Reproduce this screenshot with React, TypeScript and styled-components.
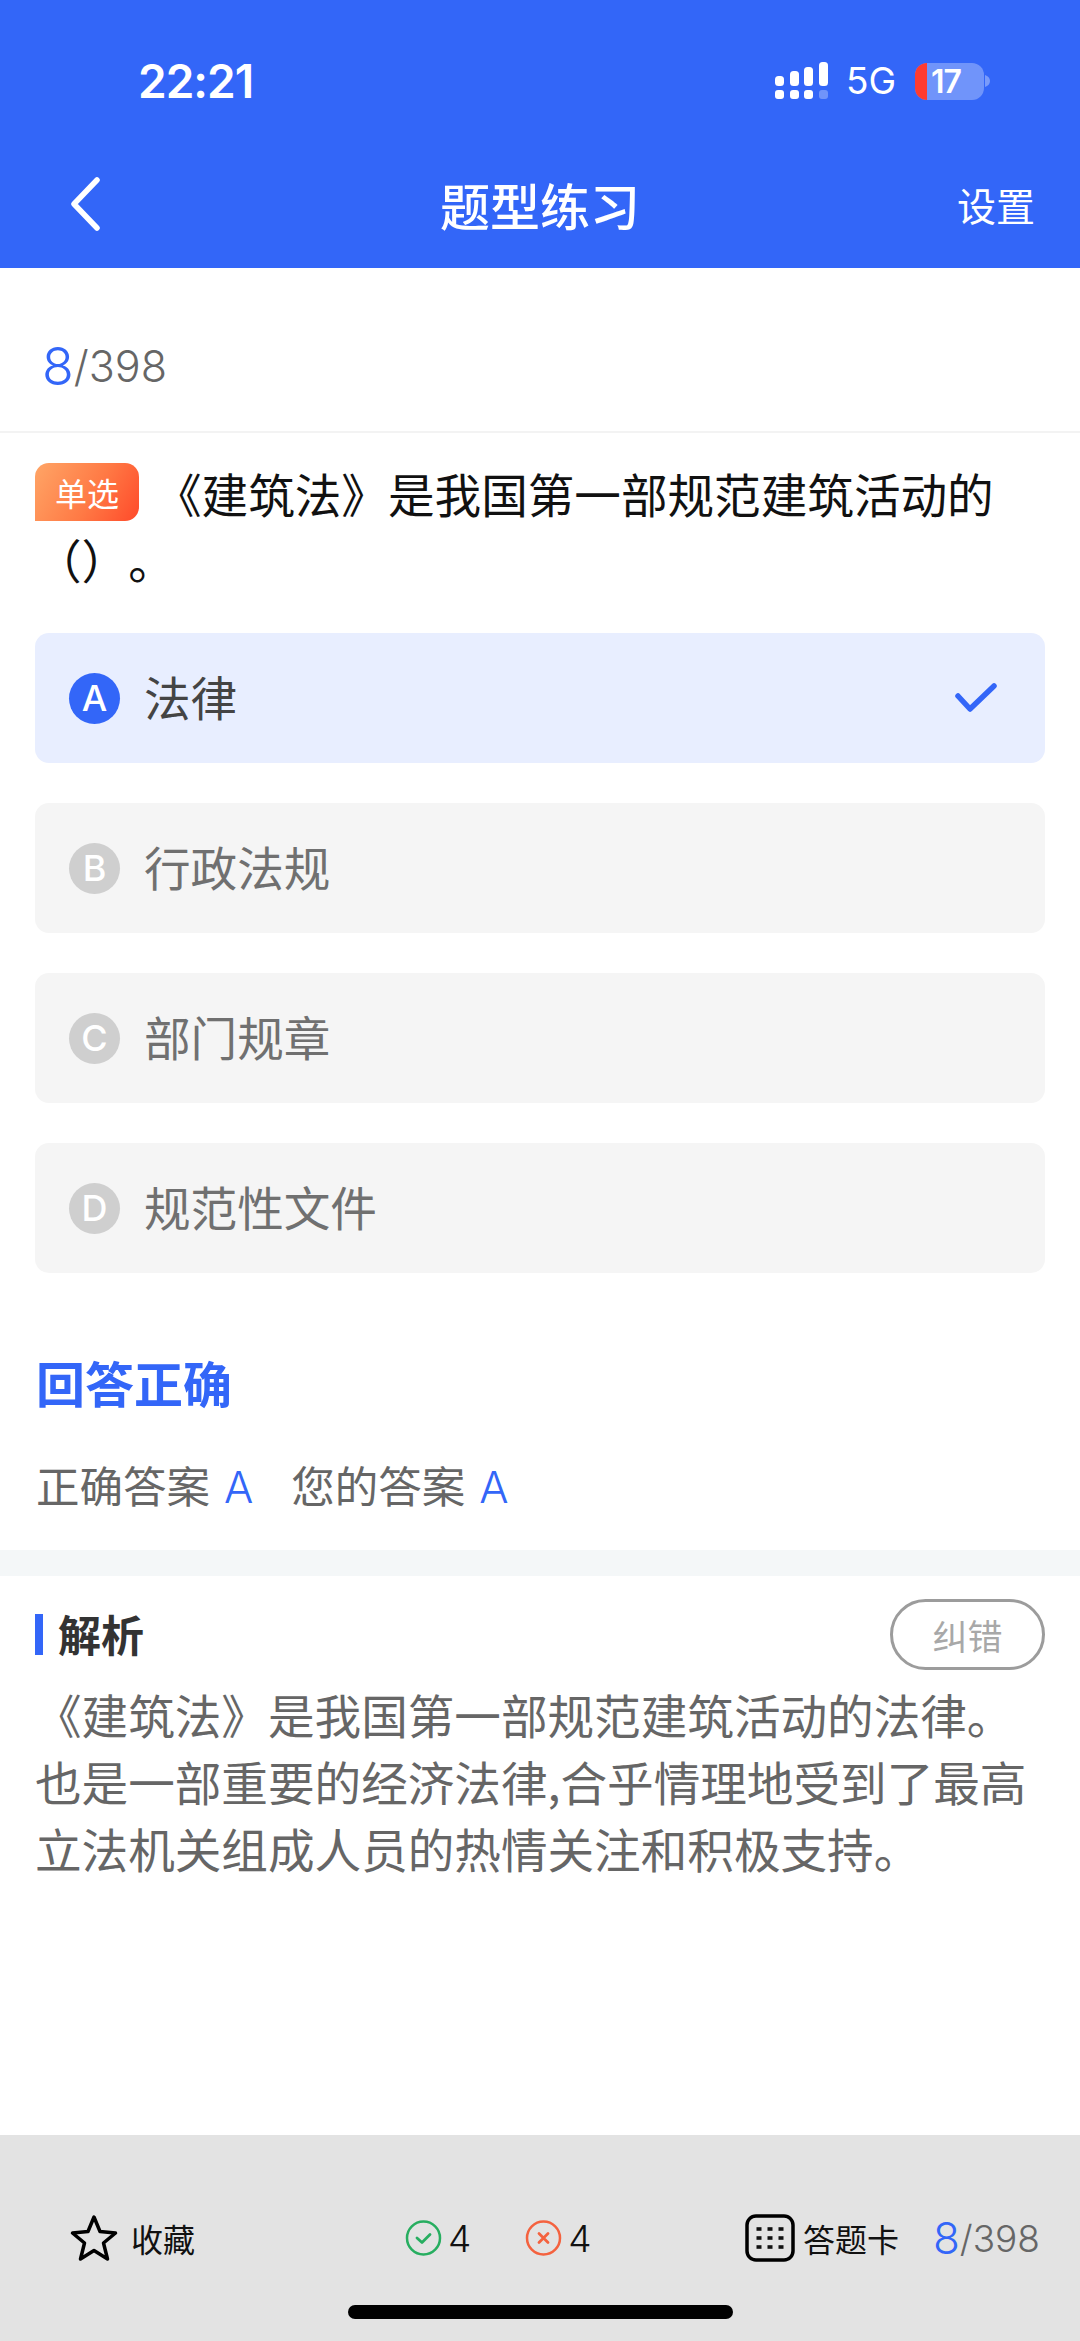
import React from "react";
import styled, { createGlobalStyle } from "styled-components";

const BLUE = "#3366f8";
const CJK = `"Noto Sans CJK SC", "Noto Sans", sans-serif`;
const LATIN = `Inter, "Noto Sans CJK SC", sans-serif`;

const Global = createGlobalStyle`
  html, body { margin: 0; padding: 0; background: #fff; }
  * { box-sizing: border-box; text-spacing-trim: space-all; }
`;

const Page = styled.div`
  width: 1080px;
  height: 2341px;
  display: flex;
  flex-direction: column;
  background: #fff;
  font-family: ${CJK};
  overflow: hidden;
`;

const Top = styled.header`
  height: 268px;
  flex: none;
  background: ${BLUE};
  color: #fff;
  display: flex;
  flex-direction: column;
`;

const StatusBar = styled.div`
  height: 100px;
  padding: 62px 90px 0 138px;
  display: flex;
  align-items: flex-start;
  justify-content: space-between;
`;

const Clock = styled.span`
  font-family: Inter, sans-serif;
  font-weight: 600;
  font-size: 46px;
  line-height: 38px;
  letter-spacing: -1px;
`;

const StatusIcons = styled.div`
  display: flex;
  align-items: center;
  height: 38px;
`;

const NetLabel = styled.span`
  font-family: Inter, sans-serif;
  font-size: 37px;
  line-height: 38px;
  margin: 0 19px 0 17px;
`;

const Battery = styled.div`
  width: 69px;
  height: 37px;
  border-radius: 12px;
  background: rgba(255, 255, 255, 0.3);
  display: flex;
  overflow: hidden;
`;

const BatteryLow = styled.span`
  width: 12px;
  background: #ff3b30;
  flex: none;
`;

const BatteryText = styled.span`
  font-family: Inter, sans-serif;
  font-weight: 600;
  font-size: 32px;
  line-height: 37px;
  margin-left: 4px;
  letter-spacing: -1px;
`;

const NavBar = styled.nav`
  flex: 1;
  padding: 40px 45px 0;
  display: grid;
  grid-template-columns: 1fr auto 1fr;
  align-items: center;
`;

const BackSlot = styled.span`
  display: flex;
  padding-left: 24px;
`;

const Title = styled.h1`
  margin: 0;
  font-size: 50px;
  font-weight: 500;
  line-height: 56px;
`;

const NavRight = styled.span`
  justify-self: end;
  font-size: 39px;
  line-height: 50px;
`;

const Counter = styled.div`
  height: 165px;
  flex: none;
  padding: 34px 0 0 42px;
  display: flex;
  align-items: center;
  border-bottom: 2px solid #f3f3f3;
`;

const Current = styled.span<{ $size: number }>`
  color: ${BLUE};
  font-family: ${LATIN};
  font-weight: 350;
  font-size: ${(p) => p.$size}px;
  line-height: 1;
`;

const Total = styled.span<{ $size: number }>`
  color: #666;
  font-family: ${LATIN};
  font-weight: 350;
  font-size: ${(p) => p.$size}px;
  line-height: 1;
`;

const Question = styled.p`
  margin: 0;
  padding: 27px 55px 0 35px;
  font-size: 46.6px;
  line-height: 66px;
  color: #111;
`;

const Badge = styled.span`
  display: inline-flex;
  align-items: center;
  justify-content: center;
  width: 104px;
  height: 58px;
  margin-right: 16px;
  vertical-align: 7px;
  border-radius: 14px 14px 14px 0;
  background: linear-gradient(120deg, #ffa566 0%, #ff7a45 55%, #ff4a2a 100%);
  color: #fff;
  font-size: 32px;
  line-height: 58px;
`;

const Options = styled.div`
  margin: 41px 35px 0;
  display: flex;
  flex-direction: column;
  gap: 40px;
`;

const Option = styled.div<{ $active?: boolean }>`
  height: 130px;
  padding: 0 48px 0 34px;
  border-radius: 14px;
  display: flex;
  align-items: center;
  background: ${(p) => (p.$active ? "#e8eeff" : "#f5f5f5")};
  color: ${(p) => (p.$active ? "#444" : "#707070")};
  font-size: 46.6px;
`;

const Letter = styled.span<{ $active?: boolean }>`
  width: 51px;
  height: 51px;
  flex: none;
  margin-right: 24px;
  border-radius: 50%;
  display: flex;
  align-items: center;
  justify-content: center;
  background: ${(p) => (p.$active ? BLUE : "#cfcfcf")};
  color: #fff;
  font-family: ${LATIN};
  font-weight: 500;
  font-size: 36px;
  line-height: 51px;
`;

const OptionLabel = styled.span`
  flex: 1;
  padding-bottom: 5px;
`;

const Result = styled.section`
  padding: 74px 36px 0;
  height: 277px;
  flex: none;
`;

const ResultTitle = styled.h2`
  margin: 0;
  color: ${BLUE};
  font-size: 49px;
  font-weight: 700;
  line-height: 70px;
`;

const ResultRow = styled.div`
  margin-top: 38px;
  display: flex;
  gap: 38px;
  color: #666;
  font-size: 43.5px;
  line-height: 60px;
`;

const AnswerLetter = styled.span`
  color: ${BLUE};
  font-family: ${LATIN};
  font-weight: 350;
  margin-left: 14px;
`;

const Band = styled.div`
  height: 26px;
  flex: none;
  background: #f4f7f8;
`;

const Analysis = styled.section`
  flex: 1;
  padding: 23px 35px 0;
`;

const AnalysisHead = styled.div`
  height: 71px;
  display: flex;
  align-items: center;
  justify-content: space-between;
`;

const AnalysisTitle = styled.h3`
  margin: 0;
  padding: 0 0 4px 15px;
  border-left: 8px solid ${BLUE};
  height: 41px;
  display: flex;
  align-items: center;
  color: #333;
  font-size: 43px;
  font-weight: 700;
`;

const ReportButton = styled.span`
  width: 155px;
  height: 71px;
  border: 3px solid #9c9c9c;
  border-radius: 36px;
  display: flex;
  align-items: center;
  justify-content: center;
  color: #a8a8a8;
  font-size: 35px;
`;

const AnalysisText = styled.p`
  margin: 10px 0 0;
  font-size: 46.6px;
  line-height: 67px;
  color: #666;
`;

const Footer = styled.footer`
  position: relative;
  height: 206px;
  flex: none;
  background: #e3e3e3;
  padding: 78px 40px 0 70px;
  display: flex;
  align-items: flex-start;
  color: #111;
`;

const FooterGroup = styled.div`
  height: 50px;
  display: flex;
  align-items: center;
`;

const FooterTallies = styled(FooterGroup)`
  margin-left: 210px;
`;

const FooterRight = styled(FooterGroup)`
  margin-left: auto;
`;

const FooterLabel = styled.span`
  font-size: 32px;
  margin-left: 13px;
`;

const CardLabel = styled(FooterLabel)`
  margin: 0 34px 0 8px;
`;

const Tally = styled.span`
  font-family: ${LATIN};
  font-weight: 300;
  font-size: 37px;
  margin: 0 54px 0 6px;
`;

const LastTally = styled(Tally)`
  margin-right: 0;
`;

const HomeBar = styled.div`
  position: absolute;
  left: 348px;
  bottom: 22px;
  width: 385px;
  height: 14px;
  border-radius: 7px;
  background: #000;
`;

const SignalIcon = () => (
  <svg width="54" height="38" viewBox="0 0 54 38" fill="#fff">
    <rect x="0" y="14" width="9" height="10" rx="3.5" />
    <rect x="15" y="9" width="9" height="15" rx="3.5" />
    <rect x="29" y="5" width="9" height="19" rx="3.5" />
    <rect x="44" y="0" width="9" height="24" rx="3.5" />
    <rect x="0" y="28" width="9" height="9" rx="3" />
    <rect x="15" y="28" width="9" height="9" rx="3" />
    <rect x="29" y="28" width="9" height="9" rx="3" />
    <rect x="44" y="28" width="9" height="9" rx="3" opacity="0.3" />
  </svg>
);

const BatteryNub = () => (
  <svg width="6" height="12" viewBox="0 0 6 12">
    <path d="M1 0 C4 1 6 3 6 6 C6 9 4 11 1 12 Z" fill="#fff" opacity="0.35" />
  </svg>
);

const BackIcon = () => (
  <svg width="32" height="54" viewBox="0 0 32 54" fill="none">
    <path d="M28 3 L5 27 L28 51" stroke="#fff" strokeWidth="5.5" strokeLinecap="round" strokeLinejoin="round" />
  </svg>
);

const CheckIcon = () => (
  <svg width="42" height="30" viewBox="0 0 42 30" fill="none">
    <path d="M3 13 L15 26 L39 3" stroke={BLUE} strokeWidth="5.5" strokeLinecap="round" strokeLinejoin="round" />
  </svg>
);

const StarIcon = () => (
  <svg width="48" height="48" viewBox="0 0 48 48" fill="none">
    <path
      d="M24 3 L30 17.5 L45.5 19 L33.5 29 L37.5 45 L24 36.5 L10.5 45 L14.5 29 L2.5 19 L18 17.5 Z"
      stroke="#000"
      strokeWidth="3.5"
      strokeLinejoin="round"
    />
  </svg>
);

const OkIcon = () => (
  <svg width="37" height="36" viewBox="0 0 37 36" fill="none">
    <circle cx="18.5" cy="18" r="16.5" stroke="#27ae60" strokeWidth="2.5" />
    <path d="M12 18 L17 22.5 L25 14.5" stroke="#27ae60" strokeWidth="2.8" strokeLinecap="round" strokeLinejoin="round" />
  </svg>
);

const WrongIcon = () => (
  <svg width="37" height="36" viewBox="0 0 37 36" fill="none">
    <circle cx="18.5" cy="18" r="16.5" stroke="#f4623f" strokeWidth="2.5" />
    <path d="M14 13.5 L23 22.5 M23 13.5 L14 22.5" stroke="#f4623f" strokeWidth="2.8" strokeLinecap="round" />
  </svg>
);

const GridIcon = () => (
  <svg width="50" height="48" viewBox="0 0 50 48" fill="none">
    <rect x="2" y="2" width="46" height="44" rx="9" stroke="#000" strokeWidth="3.5" />
    {[15, 24, 33].map((y) =>
      [14, 25, 36].map((x) => <rect key={`${x}-${y}`} x={x - 2.5} y={y - 1.8} width="5" height="3.6" fill="#111" />)
    )}
  </svg>
);

const options = [
  { key: "A", label: "法律", active: true },
  { key: "B", label: "行政法规" },
  { key: "C", label: "部门规章" },
  { key: "D", label: "规范性文件" },
];

export default function App() {
  return (
    <Page>
      <Global />
      <Top>
        <StatusBar>
          <Clock>22:21</Clock>
          <StatusIcons>
            <SignalIcon />
            <NetLabel>5G</NetLabel>
            <Battery>
              <BatteryLow />
              <BatteryText>17</BatteryText>
            </Battery>
            <BatteryNub />
          </StatusIcons>
        </StatusBar>
        <NavBar>
          <BackSlot>
            <BackIcon />
          </BackSlot>
          <Title>题型练习</Title>
          <NavRight>设置</NavRight>
        </NavBar>
      </Top>
      <Counter>
        <Current $size={52}>8</Current>
        <Total $size={43}>/398</Total>
      </Counter>
      <Question>
        <Badge>单选</Badge>
        <span>《建筑法》是我国第一部规范建筑活动的</span>
        <span>（）。</span>
      </Question>
      <Options>
        {options.map((o) => (
          <Option key={o.key} $active={o.active}>
            <Letter $active={o.active}>{o.key}</Letter>
            <OptionLabel>{o.label}</OptionLabel>
            {o.active && <CheckIcon />}
          </Option>
        ))}
      </Options>
      <Result>
        <ResultTitle>回答正确</ResultTitle>
        <ResultRow>
          <span>
            正确答案<AnswerLetter>A</AnswerLetter>
          </span>
          <span>
            您的答案<AnswerLetter>A</AnswerLetter>
          </span>
        </ResultRow>
      </Result>
      <Band />
      <Analysis>
        <AnalysisHead>
          <AnalysisTitle>解析</AnalysisTitle>
          <ReportButton>纠错</ReportButton>
        </AnalysisHead>
        <AnalysisText>
          《建筑法》是我国第一部规范建筑活动的法律。也是一部重要的经济法律,合乎情理地受到了最高立法机关组成人员的热情关注和积极支持。
        </AnalysisText>
      </Analysis>
      <Footer>
        <FooterGroup>
          <StarIcon />
          <FooterLabel>收藏</FooterLabel>
        </FooterGroup>
        <FooterTallies>
          <OkIcon />
          <Tally>4</Tally>
          <WrongIcon />
          <LastTally>4</LastTally>
        </FooterTallies>
        <FooterRight>
          <GridIcon />
          <CardLabel>答题卡</CardLabel>
          <Current $size={44}>8</Current>
          <Total $size={37}>/398</Total>
        </FooterRight>
        <HomeBar />
      </Footer>
    </Page>
  );
}
